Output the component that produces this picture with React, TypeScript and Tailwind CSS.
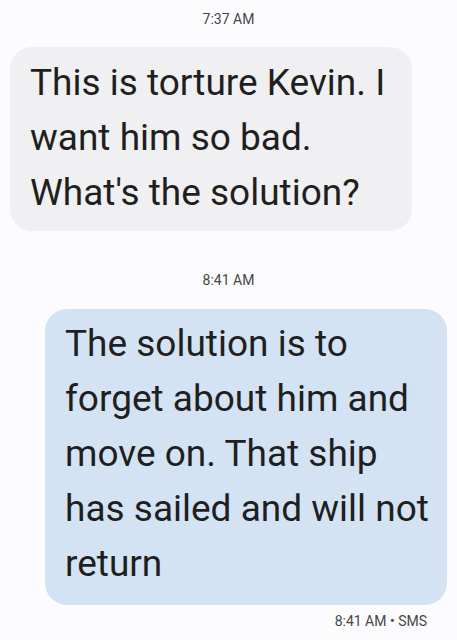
import React from 'react';

const font = { fontFamily: 'Roboto, "Noto Sans", sans-serif' };

const Stamp = ({ children }: { children: React.ReactNode }) => (
  <div className="text-center text-[14px] text-[#444746]">{children}</div>
);

const Lines = ({ lines }: { lines: string[] }) => (
  <>
    {lines.map((l) => (
      <div key={l} className="whitespace-nowrap">
        {l}
      </div>
    ))}
  </>
);

export default function App() {
  return (
    <div className="min-h-screen bg-[#fcfcfe]" style={font}>
      <div className="flex flex-col pt-[9px]">
        <Stamp>7:37 AM</Stamp>

        <div className="mt-[17px] flex pl-[10px]">
          <div className="w-[402px] rounded-[22px] bg-[#f0f0f2] px-[20px] pb-[11px] pt-[8px] text-[37px] leading-[55px] text-[#1f1f1f]">
            <Lines lines={['This is torture Kevin. I', 'want him so bad.', "What's the solution?"]} />
          </div>
        </div>

        <div className="mt-[39px]">
          <Stamp>8:41 AM</Stamp>
        </div>

        <div className="mt-[18px] flex justify-end pr-[10px]">
          <div className="w-[402px] rounded-[22px] bg-[#d3e3f3] px-[20px] pb-[14px] pt-[7px] text-[37px] leading-[55px] text-[#1f1f1f]">
            <Lines
              lines={[
                'The solution is to',
                'forget about him and',
                'move on. That ship',
                'has sailed and will not',
                'return',
              ]}
            />
          </div>
        </div>

        <div className="mt-[6px] pr-[30px] text-right text-[14px] text-[#444746]">
          8:41 AM • SMS
        </div>
      </div>
    </div>
  );
}
